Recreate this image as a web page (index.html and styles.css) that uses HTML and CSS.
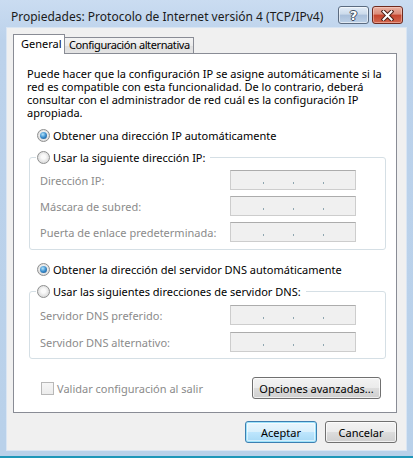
FILE: index.html
```html
<!doctype html>
<html lang="es">
<head>
<meta charset="UTF-8">
<title>Propiedades: Protocolo de Internet versión 4 (TCP/IPv4)</title>
<link rel="stylesheet" href="styles.css">
</head>
<body>
<div class="window">
    <div class="titlebar">
        <span class="title">Propiedades: Protocolo de Internet versión 4 (TCP/IPv4)</span>
        <div class="captionButtons">
            <span class="cap capHelp">?</span>
            <span class="cap capClose">
                <svg width="13" height="11" viewBox="0 0 13 11">
                    <path d="M2.5 1.5 L10.5 9.5 M10.5 1.5 L2.5 9.5" stroke="#4a1d15" stroke-width="4" stroke-linecap="square"/>
                    <path d="M2.5 1.5 L10.5 9.5 M10.5 1.5 L2.5 9.5" stroke="#fff" stroke-width="2" stroke-linecap="square"/>
                </svg>
            </span>
        </div>
    </div>
    <div class="client">
        <div class="tabs">
            <span class="tab tabActive">General</span><span class="tab tabAlt">Configuración alternativa</span>
        </div>
        <div class="panel">
            <p class="intro">Puede hacer que la configuración IP se asigne automáticamente si la<br>red es compatible con esta funcionalidad. De lo contrario, deberá<br>consultar con el administrador de red cuál es la configuración IP<br>apropiada.</p>

            <label class="option optionIp"><span class="radio radioOn"></span>Obtener una dirección IP automáticamente</label>
            <fieldset class="group groupIp">
                <legend><span class="radio"></span>Usar la siguiente dirección IP:</legend>
                <div class="field"><span class="fieldLabel">Dirección IP:</span><span class="ipBox"><i></i><i></i><i></i></span></div>
                <div class="field"><span class="fieldLabel">Máscara de subred:</span><span class="ipBox"><i></i><i></i><i></i></span></div>
                <div class="field"><span class="fieldLabel">Puerta de enlace predeterminada:</span><span class="ipBox"><i></i><i></i><i></i></span></div>
            </fieldset>

            <label class="option optionDns"><span class="radio radioOn"></span>Obtener la dirección del servidor DNS automáticamente</label>
            <fieldset class="group groupDns">
                <legend><span class="radio"></span>Usar las siguientes direcciones de servidor DNS:</legend>
                <div class="field"><span class="fieldLabel">Servidor DNS preferido:</span><span class="ipBox"><i></i><i></i><i></i></span></div>
                <div class="field"><span class="fieldLabel">Servidor DNS alternativo:</span><span class="ipBox"><i></i><i></i><i></i></span></div>
            </fieldset>

            <div class="panelFoot">
                <label class="check"><span class="checkBox"></span>Validar configuración al salir</label>
                <span class="button buttonWide">Opciones avanzadas...</span>
            </div>
        </div>
        <div class="actions">
            <span class="button buttonDefault">Aceptar</span>
            <span class="button">Cancelar</span>
        </div>
    </div>
</div>
</body>
</html>
```

FILE: styles.css
```css
*,
*:after,
*:before {
    box-sizing: border-box;
}
body {
    background: #fff;
    color: #000;
    font-family: "Noto Sans", "DejaVu Sans", sans-serif;
    font-size: 11px;
    line-height: 13px;
    margin: 0;
}
.window {
    background: linear-gradient(#cadcf1, #bcd2eb 40px, #b9d1ea);
    border-bottom: 2px solid #1f97b9;
    display: flex;
    flex-direction: column;
    height: 458px;
    padding: 0 7px 6px 7px;
    width: 413px;
}
.titlebar {
    align-items: flex-start;
    display: flex;
    flex: none;
    height: 28px;
    justify-content: space-between;
}
.title {
    color: #1b1b1b;
    font-size: 12px;
    line-height: 16px;
    margin: 9px 0 0 4px;
    white-space: nowrap;
}
.captionButtons {
    display: flex;
    gap: 3px;
    margin: 6px 3px 0 0;
}
.cap {
    align-items: center;
    border: 1px solid #5b6b80;
    border-radius: 3px;
    display: flex;
    height: 18px;
    justify-content: center;
    width: 31px;
}
.capHelp {
    background: linear-gradient(#e3ecf7, #cbdaeb 45%, #a9bfda 50%, #bcd0e6);
    box-shadow: inset 0 0 0 1px rgba(255, 255, 255, 0.55);
    color: #fff;
    font-family: "DejaVu Sans", sans-serif;
    font-size: 13px;
    font-weight: bold;
    text-shadow: 1px 0 #3d4b5e, -1px 0 #3d4b5e, 0 1px #3d4b5e, 0 -1px #3d4b5e;
}
.capClose {
    background: linear-gradient(#eab0a2, #da8b79 45%, #c5442d 50%, #d2674f);
    border-color: #6e2a1f;
    box-shadow: inset 0 0 0 1px rgba(255, 220, 210, 0.45);
}
.client {
    background: #f0f0f0;
    box-shadow: 0 0 0 1px #d9e5f3;
    display: flex;
    flex: 1;
    flex-direction: column;
    padding: 6px 0 0 6px;
}
.tabs {
    align-items: flex-end;
    display: flex;
    height: 19px;
}
.tab {
    background: linear-gradient(#f3f3f3, #ebebeb 50%, #dedede 50%, #e4e4e4);
    border: 1px solid #898c95;
    border-bottom: 0;
    border-left: 0;
    height: 16px;
    line-height: 14px;
    padding: 0 5px 0 5px;
    white-space: nowrap;
}
.tabAlt {
    letter-spacing: -0.4px;
    padding-left: 4px;
    width: 129px;
}
.tabActive {
    background: #fff;
    border-left: 1px solid #898c95;
    height: 20px;
    margin-bottom: -1px;
    padding: 2px 7px 0 7px;
    position: relative;
    width: 52px;
}
.panel {
    background: #fff;
    border: 1px solid #898c95;
    display: flex;
    flex: none;
    flex-direction: column;
    height: 360px;
    padding: 13px 0 0 13px;
    width: 384px;
}
.intro {
    margin: 0;
    white-space: nowrap;
}
.option {
    align-items: center;
    display: flex;
    gap: 3px;
    height: 13px;
    margin-left: 10px;
    white-space: nowrap;
}
.optionIp {
    margin-top: 10px;
}
.optionDns {
    margin-top: 13px;
}
.radio {
    background: radial-gradient(circle at 50% 45%, #fafafa 25%, #e6e6e6 55%, #cfcfcf);
    border: 1px solid #8e8f8f;
    border-radius: 50%;
    flex: none;
    height: 13px;
    position: relative;
    width: 13px;
}
.radioOn:after {
    background: radial-gradient(circle at 40% 35%, #b2e4fb, #3a8ccc 50%, #154a7f);
    border-radius: 50%;
    content: "";
    height: 7px;
    left: 2px;
    position: absolute;
    top: 2px;
    width: 7px;
}
.group {
    border: 1px solid #d5dfe5;
    border-radius: 3px;
    margin: 8px 10px 0 2px;
    padding: 0 0 7px 0;
}
.groupDns {
    margin-top: 8px;
    padding-bottom: 6px;
}
.group legend {
    align-items: center;
    display: flex;
    gap: 3px;
    height: 14px;
    margin-left: 6px;
    padding: 0 5px 0 1px;
    white-space: nowrap;
}
.field {
    align-items: center;
    display: flex;
    height: 20px;
    margin-top: 6px;
    padding-left: 10px;
}
.groupDns .field {
    margin-top: 7px;
}
.fieldLabel {
    color: #8b8b8b;
    width: 190px;
}
.ipBox {
    align-items: flex-end;
    background: #f0f0f0;
    border: 1px solid #cdcdcd;
    border-top-color: #acacac;
    display: flex;
    height: 20px;
    padding: 0 0 5px 32px;
    width: 126px;
}
.ipBox i {
    background: #8ea6b0;
    height: 2px;
    margin-right: 29px;
    width: 1px;
}
.panelFoot {
    align-items: center;
    display: flex;
    height: 22px;
    justify-content: space-between;
    margin: 18px 15px 0 14px;
}
.check {
    align-items: center;
    color: #8b8b8b;
    display: flex;
    gap: 3px;
}
.checkBox {
    background: linear-gradient(#f6f6f6, #ececec);
    border: 1px solid #b8b8b8;
    height: 13px;
    width: 13px;
}
.button {
    align-items: center;
    background: linear-gradient(#f3f3f3, #ebebeb 50%, #dddddd 50%, #cfcfcf);
    border: 1px solid #707070;
    border-radius: 3px;
    box-shadow: inset 0 0 0 1px rgba(255, 255, 255, 0.7);
    display: flex;
    height: 22px;
    justify-content: center;
    white-space: nowrap;
    width: 72px;
}
.buttonWide {
    width: 129px;
}
.buttonDefault {
    background: linear-gradient(#eaf6fd, #d9f0fc 50%, #bee6fd 50%, #a7d9f5);
    border-color: #3c7fb1;
    box-shadow: inset 0 0 0 1px #9ee3fb, inset 0 0 0 2px rgba(255, 255, 255, 0.5);
}
.actions {
    display: flex;
    gap: 8px;
    justify-content: flex-end;
    margin: 8px 9px 0 0;
}
```
